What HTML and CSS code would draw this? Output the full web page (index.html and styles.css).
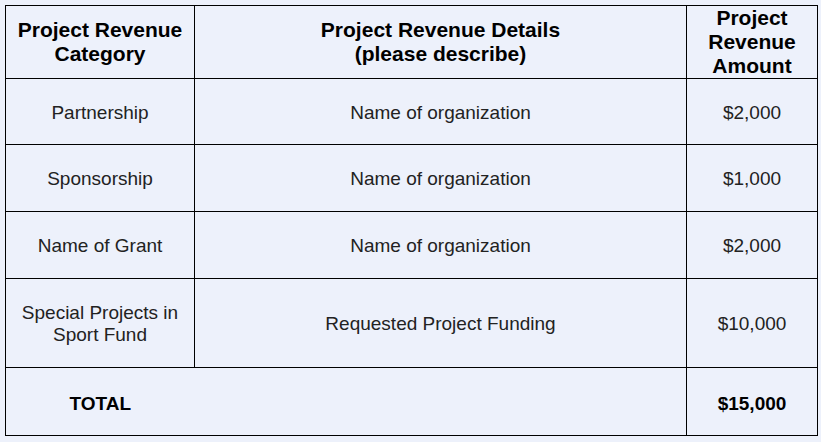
FILE: index.html
```html
<!DOCTYPE html>
<html>
<head>
<meta charset="utf-8">
<link rel="stylesheet" href="styles.css">
</head>
<body>
<table class="rev">
  <colgroup>
    <col class="c1">
    <col class="c2">
    <col class="c3">
  </colgroup>
  <tr class="r-head">
    <th>Project Revenue<br>Category</th>
    <th>Project Revenue Details<br>(please describe)</th>
    <th>Project<br>Revenue<br>Amount</th>
  </tr>
  <tr class="r-a">
    <td>Partnership</td>
    <td>Name of organization</td>
    <td>$2,000</td>
  </tr>
  <tr class="r-b">
    <td>Sponsorship</td>
    <td>Name of organization</td>
    <td>$1,000</td>
  </tr>
  <tr class="r-b">
    <td>Name of Grant</td>
    <td>Name of organization</td>
    <td>$2,000</td>
  </tr>
  <tr class="r-c">
    <td>Special Projects in<br>Sport Fund</td>
    <td>Requested Project Funding</td>
    <td>$10,000</td>
  </tr>
  <tr class="r-total">
    <td class="total-label">TOTAL</td>
    <td class="total-gap"></td>
    <td class="total-amt">$15,000</td>
  </tr>
</table>
</body>
</html>
```
FILE: styles.css
```css
html, body {
  margin: 0;
  background: #edf1fb;
}
body {
  padding: 5px;
  font-family: "Liberation Sans", Arial, sans-serif;
}
.rev {
  border-collapse: collapse;
  table-layout: fixed;
  width: 812px;
}
.c1 { width: 189px; }
.c2 { width: 492px; }
.c3 { width: 131px; }
.rev th, .rev td {
  border: 1px solid #000;
  padding: 2px 0 0;
  text-align: center;
  vertical-align: middle;
}
.rev th {
  padding: 0;
  font-size: 21px;
  font-weight: bold;
  color: #000;
  line-height: 24px;
}
.rev td {
  font-size: 19px;
  color: #222;
  line-height: 22px;
}
.r-head { height: 73px; }
.r-a { height: 66px; }
.r-b { height: 67px; }
.r-c { height: 89px; }
.r-total { height: 68px; }
.rev .r-total td {
  padding-top: 4px;
}
.rev td.total-label {
  border-right-style: hidden;
  font-weight: bold;
  color: #000;
}
.rev td.total-amt {
  font-weight: bold;
  color: #000;
}
```
